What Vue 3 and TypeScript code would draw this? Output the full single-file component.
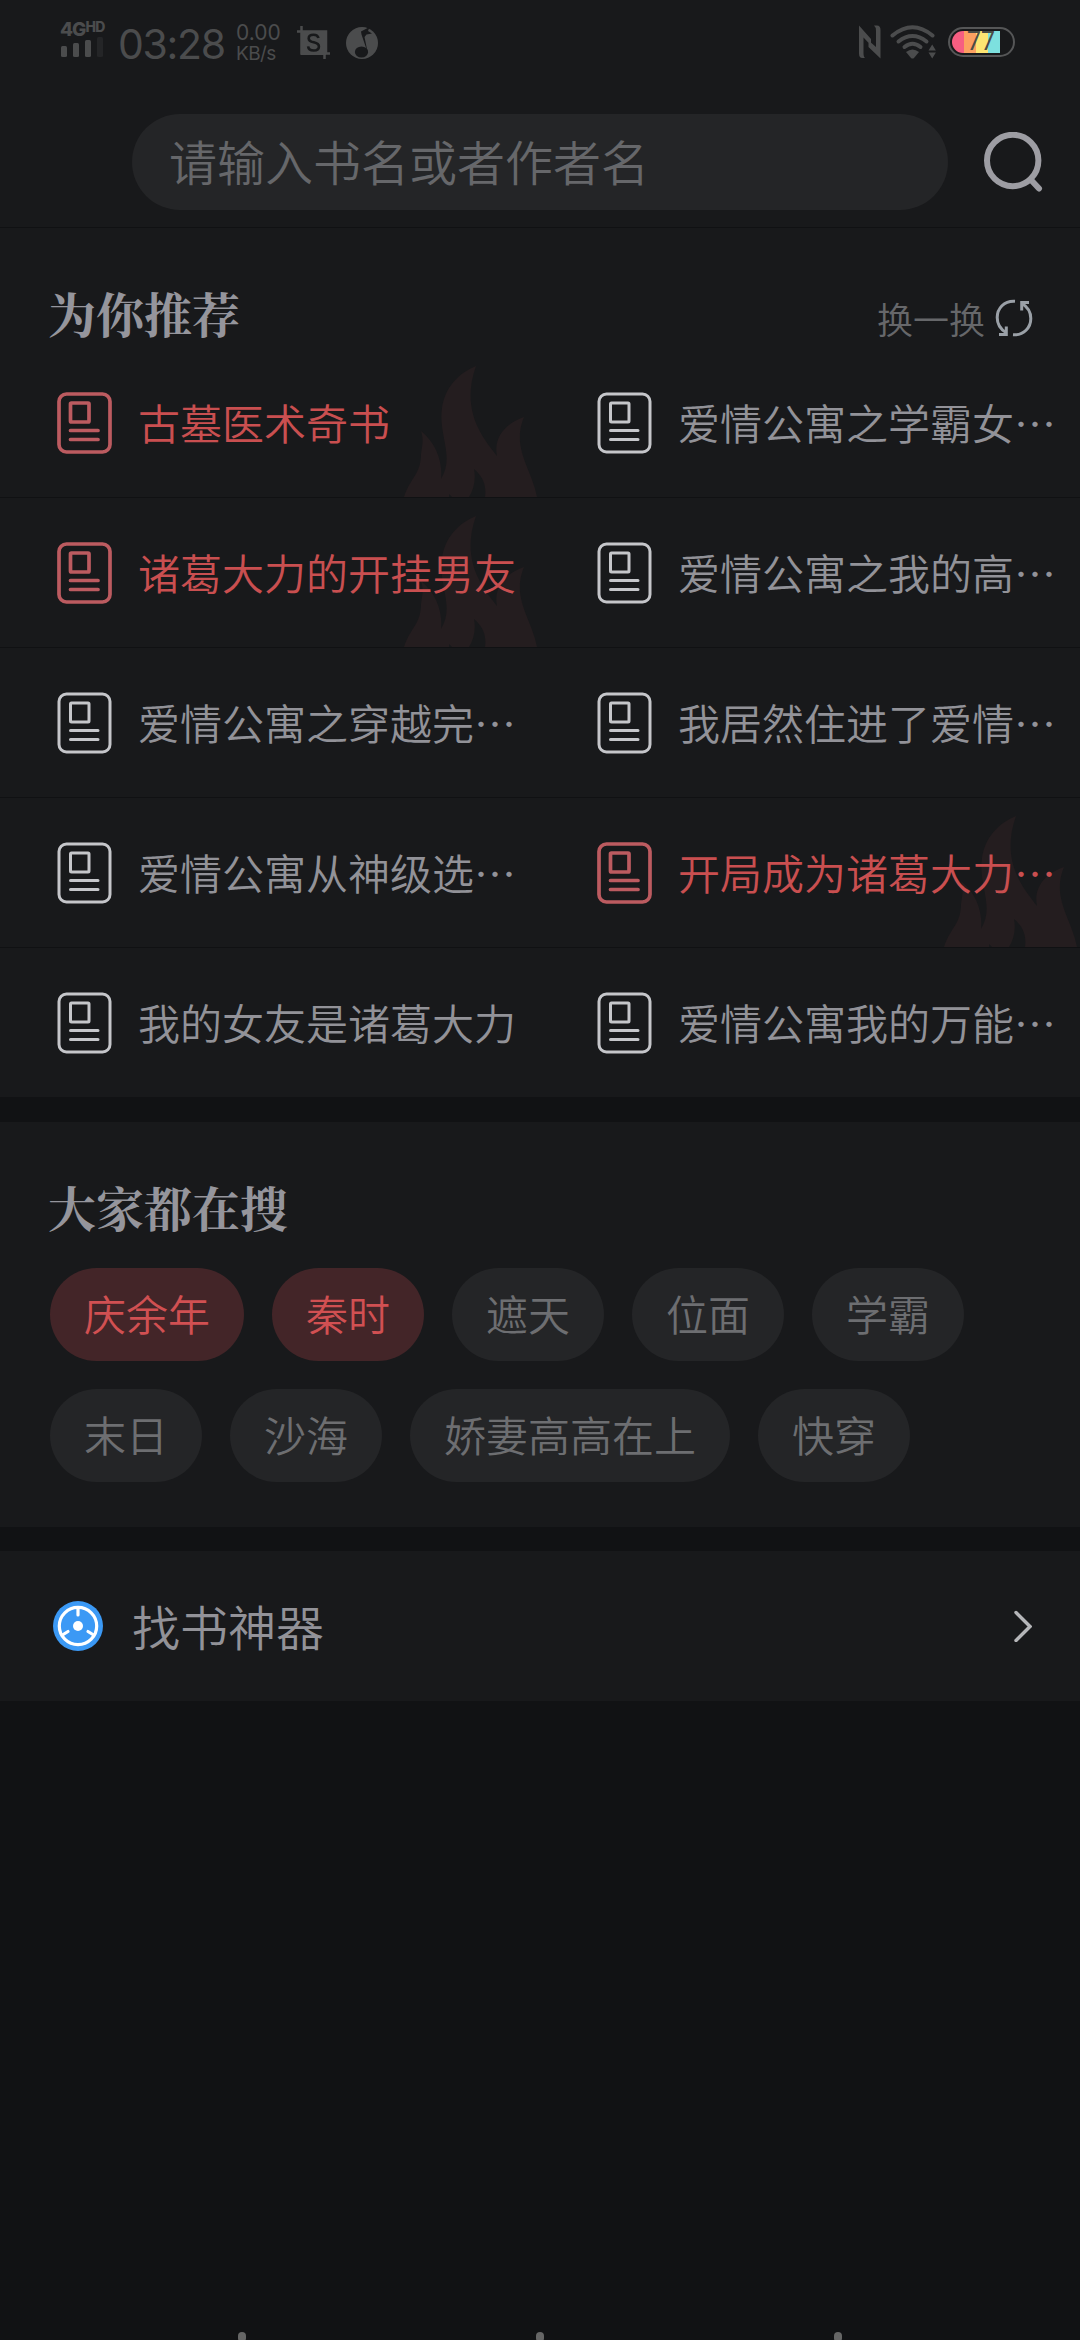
<script setup lang="ts">
interface Entry {
  title: string
  hot?: boolean
}

const books: Entry[] = [
  { title: '古墓医术奇书', hot: true },
  { title: '爱情公寓之学霸女…' },
  { title: '诸葛大力的开挂男友', hot: true },
  { title: '爱情公寓之我的高…' },
  { title: '爱情公寓之穿越完…' },
  { title: '我居然住进了爱情…' },
  { title: '爱情公寓从神级选…' },
  { title: '开局成为诸葛大力…', hot: true },
  { title: '我的女友是诸葛大力' },
  { title: '爱情公寓我的万能…' },
]

const tags: Entry[] = [
  { title: '庆余年', hot: true },
  { title: '秦时', hot: true },
  { title: '遮天' },
  { title: '位面' },
  { title: '学霸' },
  { title: '末日' },
  { title: '沙海' },
  { title: '娇妻高高在上' },
  { title: '快穿' },
]
</script>

<template>
  <div class="screen">
    <header class="status">
      <div class="signal">
        <div class="net">4G<span class="hd">HD</span></div>
        <svg width="44" height="20" viewBox="0 0 44 20">
          <g fill="#4b4c4d">
            <rect x="1" y="9" width="6" height="11" rx="1.5" />
            <rect x="13" y="6" width="6" height="14" rx="1.5" />
            <rect x="25" y="3" width="6" height="17" rx="1.5" />
          </g>
          <rect x="37" y="0" width="6" height="20" rx="1.5" fill="#242527" />
        </svg>
      </div>
      <span class="clock">03:28</span>
      <div class="speed"><span>0.00</span><span class="unit">KB/s</span></div>
      <svg class="crop" width="33" height="33" viewBox="0 0 33 33">
        <path d="M0 5.5H29V28M4.5 0V27.5H33M27.5 27V33" fill="none" stroke="#4b4c4d" stroke-width="2.5" />
        <rect x="4" y="5" width="25" height="24" fill="#4b4c4d" />
        <path d="M21.5 12c-.6-2.300-2.500-3.300-5-3.300-2.900 0-4.800 1.400-4.800 3.700 0 5.300 10.200 2.600 10.200 8 0 2.500-2.100 4.100-5.200 4.100s-5.300-1.500-5.600-4.200" fill="none" stroke="#18191b" stroke-width="2.6" />
      </svg>
      <svg class="music" width="32" height="32" viewBox="0 0 32 32">
        <circle cx="16" cy="16" r="16" fill="#4b4c4d" />
        <ellipse cx="15.5" cy="25" rx="6.6" ry="5.6" fill="#18191b" />
        <path d="M21.8 26L15.500 7.500 15 4.500 23.500 0l-1.500 4 4 2.500-5.500 1-2 2.500Z" fill="#18191b" />
      </svg>
      <div class="status-right">
        <svg width="22" height="34" viewBox="0 0 22 34">
          <path d="M0 .5L12 14v6.500L4.500 12.500V28q0 4 1.500 5H3.500Q0 33 0 28.500ZM21.500 33.500L9.500 22v-6.500L17 22V6q0-4-2-5.500h3q3.500 0 3.500 4.500Z" fill="#4b4c4d" />
        </svg>
        <svg class="wifi" width="47" height="34" viewBox="0 0 47 34">
          <g fill="none" stroke="#4b4c4d" stroke-width="4" stroke-linecap="round">
            <path d="M2.500 10.500Q22.500-6 42.500 10.500" />
            <path d="M8.500 16.500Q22.500 5.500 36.500 16.500" />
            <path d="M14.500 22Q22.500 15.500 30.500 22" />
          </g>
          <path d="M16 27q6.500-5 13 0l-5 6q-1.500 1.200-3 0Z" fill="#4b4c4d" />
          <path d="M38.500 25.500l3.700-6 3.700 6ZM38.500 27.500l3.700 6 3.700-6Z" fill="#4b4c4d" />
        </svg>
        <div class="battery"><div class="charge"></div><span>77</span></div>
      </div>
    </header>

    <div class="search">
      <div class="field">请输入书名或者作者名</div>
      <svg width="60" height="60" viewBox="0 0 60 60">
        <g fill="none" stroke="#9d9da3" stroke-width="6" stroke-linecap="round">
          <circle cx="28.700" cy="28.500" r="25.700" />
          <path d="M48 49l7 7.500" />
        </g>
      </svg>
    </div>

    <section class="recommend">
      <div class="head">
        <h2>为你推荐</h2>
        <div class="refresh">
          <span>换一换</span>
          <svg width="38" height="38" viewBox="0 0 38 38">
            <g fill="none" stroke="#9aa0a7" stroke-width="3">
              <path d="M20 2.200C9 1.500 2.200 9.500 2.200 18.500c0 6.500 3.500 11.800 8.800 15" />
              <path d="M4 35.500h7.300v-8" />
              <path d="M18 35.800c11 .7 17.800-7.300 17.800-16.300 0-6.500-3.500-11.800-8.800-15" />
              <path d="M34 3.500h-7.300v8" />
            </g>
          </svg>
        </div>
      </div>
      <div class="grid">
        <div v-for="book in books" :key="book.title" class="book" :class="{ hot: book.hot }">
          <svg v-if="book.hot" class="flame" width="133" height="131" viewBox="0 0 133 131">
            <path d="M0 131C6 112 17 108 17 88C18 80 20 74 17 65C32 77 39 96 37 113C51 90 34 69 38 42C41 21 55 7 72 0C56 45 79 72 93 90C89 70 103 57 120 51C107 82 128 103 133 131H81C83 117 77 109 70 103C72 113 70 123 65 131H48L45 128L45 131Z" fill="#241d1f" />
          </svg>
          <svg class="doc" width="55" height="62" viewBox="0 0 55 62">
            <g fill="none" stroke="currentColor" stroke-linecap="round">
              <rect x="2" y="2" width="51" height="58" rx="7.5" />
              <rect x="13.5" y="11" width="18.500" height="19" rx="1" />
              <path d="M13.500 38.500h27.500M13.500 47.500h27.500" />
            </g>
          </svg>
          <span>{{ book.title }}</span>
        </div>
      </div>
    </section>

    <section class="trending">
      <h2>大家都在搜</h2>
      <div class="tags">
        <span v-for="tag in tags" :key="tag.title" class="tag" :class="{ hot: tag.hot }">{{ tag.title }}</span>
      </div>
    </section>

    <section class="finder">
      <svg width="50" height="50" viewBox="0 0 50 50">
        <circle cx="25" cy="25" r="25" fill="#3b99f5" />
        <g fill="none" stroke="#fff" stroke-width="3.2">
          <circle cx="25" cy="25" r="18.700" />
          <path d="M25 7v7M9.400 34l5.600-3.500M40.600 34l-5.600-3.500" stroke-linecap="round" />
        </g>
        <circle cx="25" cy="25" r="5" fill="#fff" />
      </svg>
      <span>找书神器</span>
      <svg class="chevron" width="18" height="32" viewBox="0 0 18 32">
        <path d="M2 2.500l14 14L2 30.500" fill="none" stroke="#b5b6b9" stroke-width="3.4" stroke-linecap="round" />
      </svg>
    </section>

    <footer class="nav"><i></i><i></i><i></i></footer>
  </div>
</template>

<style>
body {
  background: #111214;
}
</style>

<style scoped>
.screen {
  display: flex;
  flex-direction: column;
  width: 1080px;
  height: 2340px;
  overflow: hidden;
  background: #111214;
  color: #929298;
  font-family: "Noto Sans CJK SC", sans-serif;
  font-weight: 350;
}
.status {
  display: flex;
  height: 84px;
  padding-left: 60px;
  background: #18191b;
  color: #4b4c4d;
  font-family: Inter, Roboto, sans-serif;
}
.signal {
  width: 46px;
  padding-top: 20px;
}
.net {
  display: flex;
  height: 17px;
  font: 800 19px/20px Inter, sans-serif;
  letter-spacing: -1px;
}
.hd {
  font-size: 14px;
  line-height: 14px;
  letter-spacing: -0.5px;
}
.signal svg {
  display: block;
}
.clock {
  width: 118px;
  padding-left: 12px;
  font: 400 41px/88px Inter, sans-serif;
  letter-spacing: -1.3px;
  white-space: nowrap;
}
.speed {
  display: flex;
  flex-direction: column;
  width: 61px;
  padding-top: 23px;
  font: 400 21px/20px Inter, sans-serif;
}
.unit {
  font-size: 19px;
  line-height: 21px;
  letter-spacing: -0.6px;
}
.crop {
  margin-top: 26px;
}
.music {
  margin: 27px 0 0 16px;
}
.status-right {
  display: flex;
  margin: 25px 65px 0 auto;
}
.wifi {
  margin-left: 9px;
}
.battery {
  position: relative;
  box-sizing: border-box;
  width: 67px;
  height: 30px;
  margin: 2px 0 0 11px;
  padding: 2px;
  border: 2px solid #555657;
  border-radius: 15px;
}
.charge {
  width: 48px;
  height: 22px;
  border-radius: 11px 0 0 11px;
  background: linear-gradient(90deg, #f65e82 0 25%, #fca061 25% 50%, #fee572 50% 75%, #7de0df 75%);
}
.battery span {
  position: absolute;
  left: 17px;
  top: 1px;
  color: #4b4c45;
  font: 400 25px/24px Roboto, sans-serif;
}
.search {
  display: flex;
  box-sizing: border-box;
  height: 144px;
  padding: 30px 36px 0 132px;
  border-bottom: 1px solid #101113;
  background: #18191b;
}
.field {
  box-sizing: border-box;
  width: 816px;
  height: 96px;
  margin-right: 36px;
  padding-left: 37px;
  border-radius: 48px;
  background: #242527;
  color: #66676a;
  font-size: 48px;
  line-height: 93px;
}
.search svg {
  margin-top: 18px;
}
h2 {
  margin: 0;
  color: #95959c;
  font: 700 48px/60px "Noto Serif CJK SC", "Noto Serif SC", "Source Han Serif SC", "Noto Sans CJK SC", serif;
}
.recommend {
  background: #18191b;
}
.head {
  display: flex;
  justify-content: space-between;
  height: 120px;
  padding: 0 47px 0 48px;
}
.head h2 {
  margin-top: 55px;
}
.refresh {
  display: flex;
  gap: 10px;
  margin-top: 71px;
  color: #66676a;
  font-size: 36px;
  line-height: 38px;
}
.grid {
  display: grid;
  grid-template-columns: 540px 540px;
}
.book {
  position: relative;
  display: flex;
  align-items: center;
  box-sizing: border-box;
  height: 150px;
  padding-left: 57px;
  border-bottom: 1px solid #101113;
  font-size: 42px;
  white-space: nowrap;
}
.book:nth-last-child(-n + 2) {
  height: 149px;
  border-bottom: 0;
}
.flame {
  position: absolute;
  left: 404px;
  bottom: 0;
}
.doc {
  position: relative;
  margin-right: 26px;
  color: #c5c6ca;
  stroke-width: 3;
}
.book span {
  position: relative;
  padding-bottom: 2px;
}
.hot {
  color: #c94f50;
}
.hot .doc {
  color: #bc5b60;
  stroke-width: 3.7;
}
.trending {
  height: 405px;
  margin-top: 25px;
  background: #18191b;
}
.trending h2 {
  padding: 55px 0 0 48px;
}
.tags {
  display: flex;
  flex-wrap: wrap;
  gap: 28px;
  padding: 31px 100px 0 50px;
}
.tag {
  height: 93px;
  padding: 0 34px;
  border-radius: 47px;
  background: #242527;
  color: #6d6e71;
  font-size: 42px;
  line-height: 90px;
}
.tag.hot {
  background: #432528;
  color: #d15052;
}
.finder {
  display: flex;
  align-items: center;
  height: 150px;
  margin-top: 24px;
  padding: 0 48px 0 53px;
  background: #18191b;
  font-size: 48px;
}
.finder span {
  margin-left: 29px;
  padding-bottom: 3px;
}
.chevron {
  margin-left: auto;
}
.nav {
  display: flex;
  justify-content: space-between;
  height: 8px;
  margin-top: auto;
  padding: 0 238px;
}
.nav i {
  width: 8px;
  height: 10px;
  border-radius: 4px;
  background: #666;
}
</style>
